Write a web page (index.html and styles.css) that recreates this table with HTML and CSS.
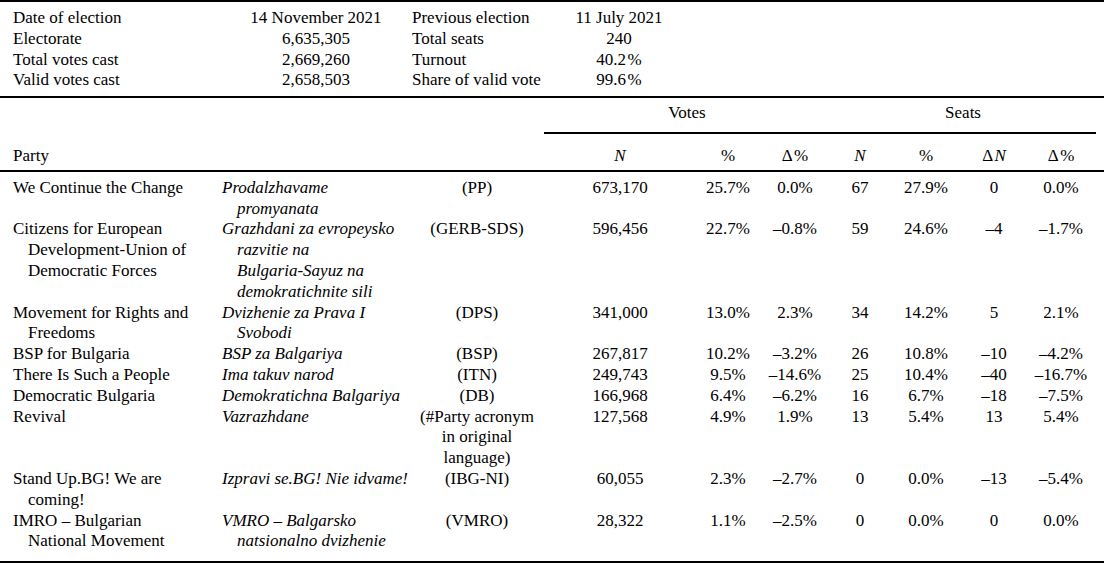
FILE: index.html
```html
<!DOCTYPE html>
<html lang="en">
<head>
<meta charset="utf-8">
<title>Bulgarian parliamentary election, November 2021</title>
<link rel="stylesheet" href="styles.css">
</head>
<body>
<div class="page">
  <div class="info">
    <div class="lbl">Date of election</div><div class="val">14 November 2021</div><div class="lbl lbl2">Previous election</div><div class="val">11 July 2021</div>
    <div class="lbl">Electorate</div><div class="val">6,635,305</div><div class="lbl lbl2">Total seats</div><div class="val">240</div>
    <div class="lbl">Total votes cast</div><div class="val">2,669,260</div><div class="lbl lbl2">Turnout</div><div class="val">40.2&#8202;%</div>
    <div class="lbl">Valid votes cast</div><div class="val">2,658,503</div><div class="lbl lbl2">Share of valid vote</div><div class="val">99.6&#8202;%</div>
  </div>

  <table class="results">
    <colgroup>
      <col class="c-party"><col class="c-orig"><col class="c-acr"><col class="c-vn"><col class="c-vp"><col class="c-vd"><col class="c-sn"><col class="c-sp"><col class="c-sdn"><col class="c-sdp">
    </colgroup>
    <thead>
      <tr class="grp-row">
        <th colspan="3"></th>
        <th colspan="3" class="grp"><div class="grp-rule">Votes</div></th>
        <th colspan="4" class="grp"><div class="grp-rule seats">Seats</div></th>
      </tr>
      <tr class="head-row">
        <th class="party">Party</th>
        <th></th>
        <th></th>
        <th class="num"><i>N</i></th>
        <th class="num">%</th>
        <th class="num">Δ&#8202;%</th>
        <th class="num"><i>N</i></th>
        <th class="num">%</th>
        <th class="num">Δ&#8202;<i>N</i></th>
        <th class="num last">Δ&#8202;%</th>
      </tr>
    </thead>
    <tbody>
      <tr class="first">
        <td class="party">We Continue the Change</td>
        <td class="orig">Prodalzhavame<br>promyanata</td>
        <td class="acr">(PP)</td>
        <td class="num">673,170</td><td class="num">25.7%</td><td class="num">0.0%</td>
        <td class="num">67</td><td class="num">27.9%</td><td class="num">0</td><td class="num last">0.0%</td>
      </tr>
      <tr>
        <td class="party">Citizens for European<br>Development-Union of<br>Democratic Forces</td>
        <td class="orig">Grazhdani za evropeysko<br>razvitie na<br>Bulgaria-Sayuz na<br>demokratichnite sili</td>
        <td class="acr">(GERB-SDS)</td>
        <td class="num">596,456</td><td class="num">22.7%</td><td class="num">–0.8%</td>
        <td class="num">59</td><td class="num">24.6%</td><td class="num">–4</td><td class="num last">–1.7%</td>
      </tr>
      <tr>
        <td class="party">Movement for Rights and<br>Freedoms</td>
        <td class="orig">Dvizhenie za Prava I<br>Svobodi</td>
        <td class="acr">(DPS)</td>
        <td class="num">341,000</td><td class="num">13.0%</td><td class="num">2.3%</td>
        <td class="num">34</td><td class="num">14.2%</td><td class="num">5</td><td class="num last">2.1%</td>
      </tr>
      <tr>
        <td class="party">BSP for Bulgaria</td>
        <td class="orig">BSP za Balgariya</td>
        <td class="acr">(BSP)</td>
        <td class="num">267,817</td><td class="num">10.2%</td><td class="num">–3.2%</td>
        <td class="num">26</td><td class="num">10.8%</td><td class="num">–10</td><td class="num last">–4.2%</td>
      </tr>
      <tr>
        <td class="party">There Is Such a People</td>
        <td class="orig">Ima takuv narod</td>
        <td class="acr">(ITN)</td>
        <td class="num">249,743</td><td class="num">9.5%</td><td class="num">–14.6%</td>
        <td class="num">25</td><td class="num">10.4%</td><td class="num">–40</td><td class="num last">–16.7%</td>
      </tr>
      <tr>
        <td class="party">Democratic Bulgaria</td>
        <td class="orig">Demokratichna Balgariya</td>
        <td class="acr">(DB)</td>
        <td class="num">166,968</td><td class="num">6.4%</td><td class="num">–6.2%</td>
        <td class="num">16</td><td class="num">6.7%</td><td class="num">–18</td><td class="num last">–7.5%</td>
      </tr>
      <tr>
        <td class="party">Revival</td>
        <td class="orig">Vazrazhdane</td>
        <td class="acr">(#Party acronym<br>in original<br>language)</td>
        <td class="num">127,568</td><td class="num">4.9%</td><td class="num">1.9%</td>
        <td class="num">13</td><td class="num">5.4%</td><td class="num">13</td><td class="num last">5.4%</td>
      </tr>
      <tr>
        <td class="party">Stand Up.BG! We are<br>coming!</td>
        <td class="orig">Izpravi se.BG! Nie idvame!</td>
        <td class="acr">(IBG-NI)</td>
        <td class="num">60,055</td><td class="num">2.3%</td><td class="num">–2.7%</td>
        <td class="num">0</td><td class="num">0.0%</td><td class="num">–13</td><td class="num last">–5.4%</td>
      </tr>
      <tr class="final">
        <td class="party">IMRO – Bulgarian<br>National Movement</td>
        <td class="orig">VMRO – Balgarsko<br>natsionalno dvizhenie</td>
        <td class="acr">(VMRO)</td>
        <td class="num">28,322</td><td class="num">1.1%</td><td class="num">–2.5%</td>
        <td class="num">0</td><td class="num">0.0%</td><td class="num">0</td><td class="num last">0.0%</td>
      </tr>
    </tbody>
  </table>
</div>
</body>
</html>
```

FILE: styles.css
```css
html, body {
  margin: 0;
  padding: 0;
  background: #fff;
}

body {
  font-family: "Liberation Serif", "Times New Roman", serif;
  font-size: 17px;
  line-height: 20.8px;
  color: #000;
}

.page {
  width: 1104px;
}

.info {
  display: grid;
  grid-template-columns: 250px 132px 178px 118px;
  border-top: 2px solid #000;
  border-bottom: 2px solid #000;
  padding: 6px 0 5px 0;
}

.info .lbl {
  padding-left: 13px;
  white-space: nowrap;
}

.info .lbl2 {
  padding-left: 30px;
}

.info .val {
  text-align: center;
  white-space: nowrap;
}

.results {
  width: 1104px;
  table-layout: fixed;
  border-collapse: collapse;
  border-spacing: 0;
  border-bottom: 2px solid #000;
}

.c-party { width: 210px; }
.c-orig { width: 200px; }
.c-acr { width: 134px; }
.c-vn { width: 152px; }
.c-vp { width: 64px; }
.c-vd { width: 70px; }
.c-sn { width: 60px; }
.c-sp { width: 72px; }
.c-sdn { width: 64px; }
.c-sdp { width: 78px; }

.results th,
.results td {
  padding: 0;
  vertical-align: top;
  font-weight: normal;
  white-space: nowrap;
}

.grp-row th {
  padding-top: 5px;
}

.grp {
  text-align: center;
}

.grp-rule {
  border-bottom: 2px solid #000;
  padding-bottom: 8px;
}

.grp-rule.seats {
  margin-right: 8px;
}

.head-row th {
  padding-top: 12px;
  padding-bottom: 3px;
  border-bottom: 2px solid #000;
}

.head-row th.party {
  text-align: left;
  padding-left: 13px;
}

.num {
  text-align: center;
}

.num.last {
  padding-right: 8px;
}

td.party {
  padding-left: 28px;
  text-indent: -15px;
  text-align: left;
}

td.orig {
  padding-left: 27px;
  text-indent: -15px;
  font-style: italic;
  text-align: left;
}

td.acr {
  text-align: center;
}

tr.first td {
  padding-top: 6px;
}

tr.final td {
  padding-bottom: 9px;
}
```
